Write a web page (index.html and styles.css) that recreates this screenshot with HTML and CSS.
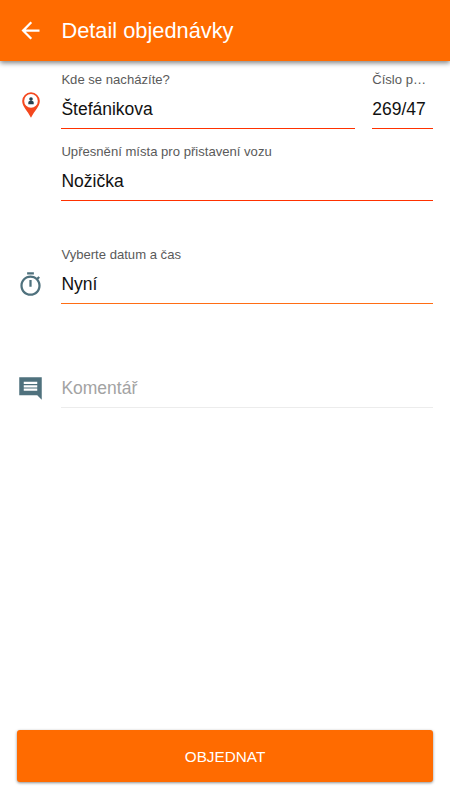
FILE: index.html
```html
<!DOCTYPE html>
<html lang="cs">
<head>
<meta charset="utf-8">
<title>Detail objednávky</title>
<link rel="stylesheet" href="styles.css">
</head>
<body>
<div class="screen">
  <header class="bar">
    <svg class="back" viewBox="0 0 24 24"><path d="M20 11H7.83l5.59-5.59L12 4l-8 8 8 8 1.41-1.41L7.83 13H20z"/></svg>
    <h1>Detail objednávky</h1>
  </header>
  <main class="form">
    <section class="row address">
      <svg class="icon pin" viewBox="0 0 18 26">
        <path fill="#f4481e" d="M9 .3A8.8 8.8 0 0 0 .2 9.1C.2 14.5 5.4 18.8 9 25.7 12.6 18.8 17.8 14.500 17.8 9.1A8.8 8.8 0 0 0 9 .3z"/>
        <circle cx="9" cy="8.9" r="6.8" fill="#fff"/>
        <circle cx="9" cy="7.1" r="1.8" fill="#25414f"/>
        <path fill="#25414f" d="M6.300 12.2v-1.500c0-1.2 1-1.900 2-1.900h1.400c1 0 2 .7 2 1.900v1.500z"/>
      </svg>
      <div class="fields">
        <div class="pair">
          <div class="field street"><label>Kde se nacházíte?</label><div class="value">Štefánikova</div></div>
          <div class="field number"><label>Číslo p…</label><div class="value">269/47</div></div>
        </div>
        <div class="field place"><label>Upřesnění místa pro přistavení vozu</label><div class="value">Nožička</div></div>
      </div>
    </section>
    <section class="row time">
      <svg class="icon clock" viewBox="0 0 24 24"><path d="M15 1H9v2h6V1zm-4 13h2V8h-2v6zm8.030-6.610l1.420-1.420c-.43-.51-.9-.99-1.410-1.410l-1.420 1.420C16.070 4.740 14.120 4 12 4c-4.970 0-9 4.030-9 9s4.020 9 9 9 9-4.030 9-9c0-2.120-.74-4.070-1.970-5.610zM12 20c-3.870 0-7-3.130-7-7s3.130-7 7-7 7 3.130 7 7-3.130 7-7 7z"/></svg>
      <div class="fields">
        <div class="field when"><label>Vyberte datum a čas</label><div class="value">Nyní</div></div>
      </div>
    </section>
    <section class="row comment">
      <svg class="icon chat" viewBox="0 0 24 24"><path d="M22 2H2v16h16l4 4V2zM18 14H6v-2h12v2zm0-3H6V9h12v2zm0-3H6V6h12v2z"/></svg>
      <div class="fields">
        <div class="field empty"><div class="value">Komentář</div></div>
      </div>
    </section>
  </main>
  <footer class="actions"><button class="order">OBJEDNAT</button></footer>
</div>
</body>
</html>
```
FILE: styles.css
```css
* { box-sizing: border-box; }
body { margin: 0; background: #fff; font-family: "Liberation Sans", Arial, sans-serif; }
.screen { display: flex; flex-direction: column; height: 800px; overflow: hidden; }
.bar {
  flex: none; display: flex; align-items: center; height: 61px; padding-left: 17px;
  background: #ff6b00; color: #fff; box-shadow: 0 2px 5px rgba(0,0,0,.5);
}
.back { width: 27px; height: 27px; margin-right: 17.4px; fill: #fff; }
h1 { margin: 0; font-size: 21.8px; font-weight: 400; line-height: 28px; padding-top: 1px; }
.form { flex: 1; padding: 11px 17.4px 0 17px; }
.row { display: grid; grid-template-columns: 27px minmax(0, 1fr); column-gap: 17.4px; }
.pair { display: grid; grid-template-columns: minmax(0, 1fr) 60.4px; column-gap: 17px; }
.field { height: 57px; border-bottom: 1px solid #ff3100; }
label {
  display: block; height: 16px; font-size: 13.1px; line-height: 16px; color: #5a5a5a;
  white-space: nowrap;
}
.value { font-size: 17.5px; line-height: 22px; padding-top: 10px; color: #111; }
.place { margin-top: 15px; }
.time { margin-top: 46px; }
.field.when { border-bottom-color: #ff6d14; }
.comment { margin-top: 63px; }
.field.empty { height: 41px; border-bottom-color: #ececec; }
.empty .value { color: #a3a3a3; }
.icon { justify-self: center; fill: #4f717d; }
.pin { width: 18px; height: 26px; margin-top: 20px; }
.clock { width: 27px; height: 27px; margin-top: 24px; }
.chat { width: 27px; height: 27px; margin-top: 8px; }
.actions { flex: none; padding: 0 17.4px 18px; }
.order {
  display: block; width: 100%; height: 52px; padding: 1px 0 0; border: 0; border-radius: 3px;
  background: #ff6b00; color: #fff; font: 15.3px "Liberation Sans", Arial, sans-serif;
  box-shadow: 0 1px 3px rgba(0,0,0,.45);
}
```
